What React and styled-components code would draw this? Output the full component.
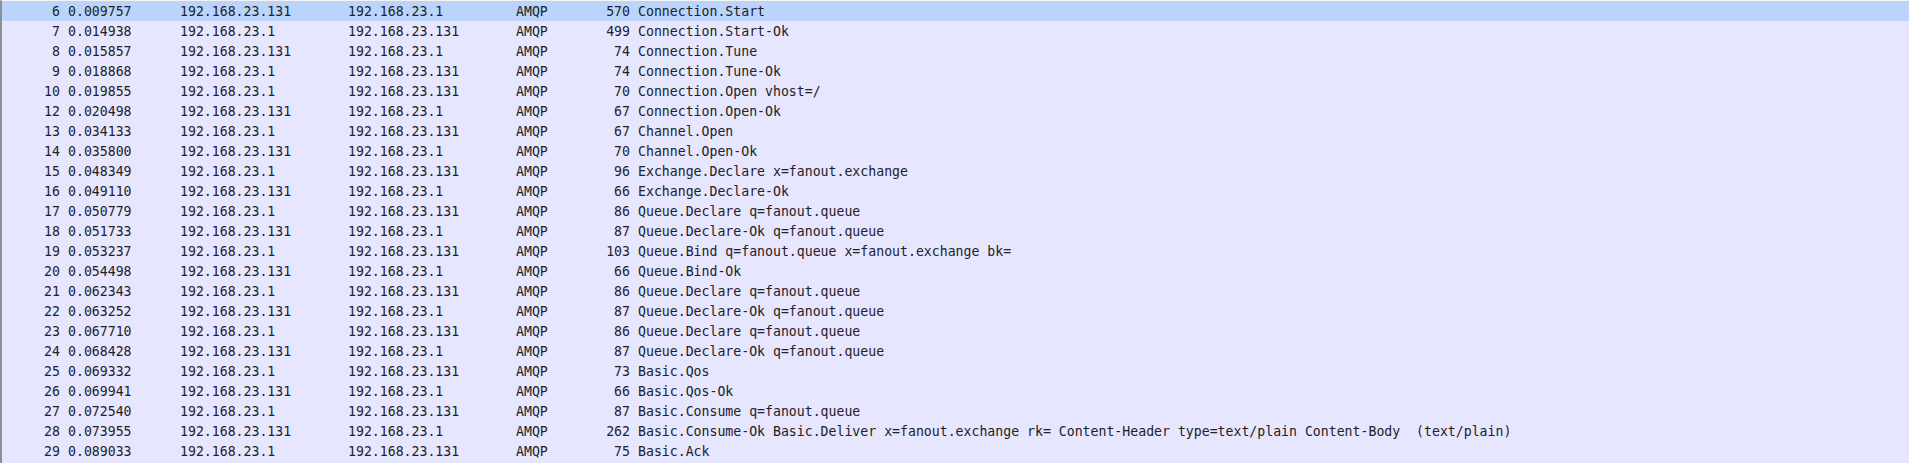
import React from "react";
import styled, { createGlobalStyle } from "styled-components";

const Global = createGlobalStyle`
  html, body { margin: 0; padding: 0; background: #e7e6ff; }
  body { font-family: "DejaVu Sans Mono", monospace; }
`;

const packets = [
  [6, "0.009757", "192.168.23.131", "192.168.23.1", 570, "Connection.Start"],
  [7, "0.014938", "192.168.23.1", "192.168.23.131", 499, "Connection.Start-Ok"],
  [8, "0.015857", "192.168.23.131", "192.168.23.1", 74, "Connection.Tune"],
  [9, "0.018868", "192.168.23.1", "192.168.23.131", 74, "Connection.Tune-Ok"],
  [10, "0.019855", "192.168.23.1", "192.168.23.131", 70, "Connection.Open vhost=/"],
  [12, "0.020498", "192.168.23.131", "192.168.23.1", 67, "Connection.Open-Ok"],
  [13, "0.034133", "192.168.23.1", "192.168.23.131", 67, "Channel.Open"],
  [14, "0.035800", "192.168.23.131", "192.168.23.1", 70, "Channel.Open-Ok"],
  [15, "0.048349", "192.168.23.1", "192.168.23.131", 96, "Exchange.Declare x=fanout.exchange"],
  [16, "0.049110", "192.168.23.131", "192.168.23.1", 66, "Exchange.Declare-Ok"],
  [17, "0.050779", "192.168.23.1", "192.168.23.131", 86, "Queue.Declare q=fanout.queue"],
  [18, "0.051733", "192.168.23.131", "192.168.23.1", 87, "Queue.Declare-Ok q=fanout.queue"],
  [19, "0.053237", "192.168.23.1", "192.168.23.131", 103, "Queue.Bind q=fanout.queue x=fanout.exchange bk="],
  [20, "0.054498", "192.168.23.131", "192.168.23.1", 66, "Queue.Bind-Ok"],
  [21, "0.062343", "192.168.23.1", "192.168.23.131", 86, "Queue.Declare q=fanout.queue"],
  [22, "0.063252", "192.168.23.131", "192.168.23.1", 87, "Queue.Declare-Ok q=fanout.queue"],
  [23, "0.067710", "192.168.23.1", "192.168.23.131", 86, "Queue.Declare q=fanout.queue"],
  [24, "0.068428", "192.168.23.131", "192.168.23.1", 87, "Queue.Declare-Ok q=fanout.queue"],
  [25, "0.069332", "192.168.23.1", "192.168.23.131", 73, "Basic.Qos"],
  [26, "0.069941", "192.168.23.131", "192.168.23.1", 66, "Basic.Qos-Ok"],
  [27, "0.072540", "192.168.23.1", "192.168.23.131", 87, "Basic.Consume q=fanout.queue"],
  [28, "0.073955", "192.168.23.131", "192.168.23.1", 262, "Basic.Consume-Ok Basic.Deliver x=fanout.exchange rk= Content-Header type=text/plain Content-Body  (text/plain)"],
  [29, "0.089033", "192.168.23.1", "192.168.23.131", 75, "Basic.Ack"],
];

const Pane = styled.div`
  height: 463px;
  box-sizing: border-box;
  border-left: 2px solid #8a9196;
  border-top: 1px solid #f3f3f6;
  background: #e7e6ff;
  overflow: hidden;
`;

const Row = styled.div`
  display: grid;
  grid-template-columns: 58px 112px 168px 168px 70px 52px 1fr;
  height: 20px;
  align-items: center;
  background: ${(p) => (p.$selected ? "#bad4fc" : "#e7e6ff")};
  color: #222226;
  font-family: "DejaVu Sans Mono", monospace;
  font-size: 13.2px;
  white-space: pre;
`;

const Cell = styled.span`
  text-align: ${(p) => (p.$right ? "right" : "left")};
  padding-left: ${(p) => (p.$right ? "0" : "8px")};
  overflow: hidden;
`;

export default function App() {
  return (
    <>
      <Global />
      <Pane>
        {packets.map(([no, time, src, dst, len, info], i) => (
          <Row key={no} $selected={i === 0}>
            <Cell $right>{no}</Cell>
            <Cell>{time}</Cell>
            <Cell>{src}</Cell>
            <Cell>{dst}</Cell>
            <Cell>AMQP</Cell>
            <Cell $right>{len}</Cell>
            <Cell>{info}</Cell>
          </Row>
        ))}
      </Pane>
    </>
  );
}
